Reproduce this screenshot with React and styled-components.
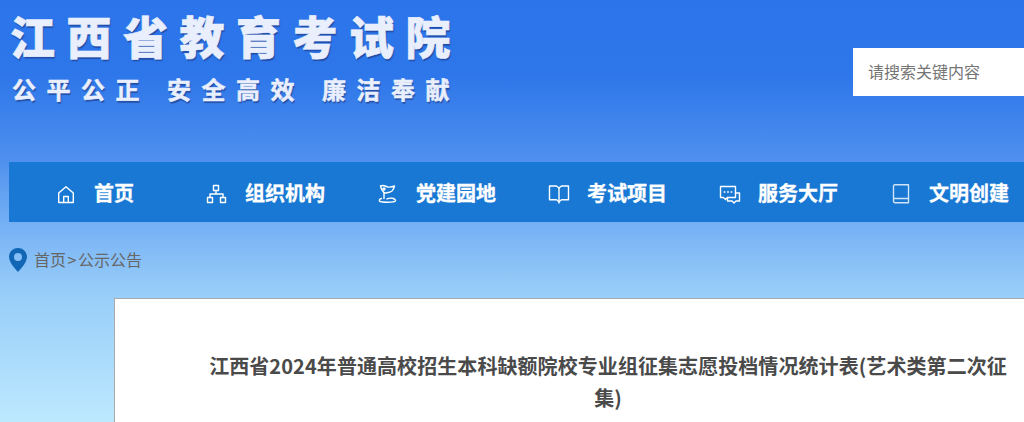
import React from "react";
import styled, { createGlobalStyle } from "styled-components";

const GlobalStyle = createGlobalStyle`
  html, body {
    margin: 0;
    padding: 0;
    height: 100%;
    overflow: hidden;
  }
  body {
    font-family: "Noto Sans CJK SC", "Noto Sans", sans-serif;
  }
`;

const Page = styled.div`
  width: 1024px;
  height: 422px;
  overflow: hidden;
  background: linear-gradient(180deg, #2b74ea 0%, #2e77ea 18%, #4f90ee 38%, #75b0f5 53%, #97cdf8 69%, #bde9ff 100%);
`;

const Header = styled.header`
  display: flex;
  justify-content: space-between;
  height: 162px;
`;

const Logo = styled.div`
  padding: 5px 0 0 10px;
  color: #e9effd;
  text-shadow: 1px 2px 1px rgba(30, 60, 140, 0.7);
`;

const LogoTitle = styled.div`
  font-size: 45px;
  font-weight: 900;
  line-height: 62px;
  letter-spacing: 11.5px;
  white-space: nowrap;
  -webkit-text-stroke: 0.6px #e9effd;
`;

const Slogan = styled.div`
  display: flex;
  gap: 17px;
  margin: 5px 0 0 2px;
  font-size: 24px;
  font-weight: 700;
  line-height: 34px;
  letter-spacing: 10.5px;
  white-space: nowrap;
  -webkit-text-stroke: 0.5px #e9effd;
`;

const SearchBox = styled.div`
  display: flex;
  align-items: center;
  width: 171px;
  height: 48px;
  margin-top: 48px;
  padding: 0 0 2px 15px;
  box-sizing: border-box;
  background: #fff;
`;

const SearchInput = styled.input`
  width: 100%;
  border: none;
  outline: none;
  padding: 0;
  background: transparent;
  font: 400 16px "Noto Sans CJK SC", sans-serif;
  &::placeholder {
    color: #757575;
    opacity: 1;
  }
`;

const Nav = styled.nav`
  display: flex;
  align-items: center;
  height: 60px;
  margin-left: 9px;
  padding-left: 46px;
  background: #1878d3;
`;

const NavItem = styled.a`
  display: flex;
  flex: 0 0 auto;
  align-items: center;
  gap: 19px;
  width: ${(p) => (p.$short ? 151 : 171)}px;
  padding-top: 2px;
  box-sizing: border-box;
  color: #fff;
  font-size: 20px;
  font-weight: 700;
  line-height: 28px;
  white-space: nowrap;
  -webkit-text-stroke: 0.3px #fff;
`;

const NavIcon = styled.svg`
  flex: 0 0 20px;
  width: 20px;
  height: 20px;
  margin-top: 1px;
  overflow: visible;
  fill: none;
  stroke: #fff;
  stroke-width: 1.4;
  stroke-linejoin: round;
  stroke-linecap: round;
  opacity: ${(p) => p.$dim || 1};
`;

const Breadcrumb = styled.div`
  display: flex;
  align-items: center;
  gap: 7px;
  height: 76px;
  padding: 0 0 2px 9px;
  box-sizing: border-box;
  color: #666;
  font-size: 16px;
`;

const Pin = styled.svg`
  width: 18px;
  height: 24px;
  margin-top: 2px;
  fill: #1167b5;
`;

const Separator = styled.span`
  margin: 0 1.5px;
`;

const Card = styled.main`
  width: 1000px;
  height: 200px;
  margin-left: 114px;
  border: 1px solid #aaa;
  background: #fff;
`;

const Title = styled.h1`
  width: 816px;
  margin: 0 0 0 85px;
  padding-top: 51px;
  color: #4a4a4a;
  font-size: 20px;
  font-weight: 700;
  line-height: 32px;
  letter-spacing: 0.07px;
  text-align: center;
`;

const icons = {
  home: (
    <>
      <path d="M3.7 9 11 2.7 18.3 9v9.5H3.7z" />
      <path d="M8.7 18.5v-6h4.6v6" />
    </>
  ),
  org: (
    <>
      <rect x="7.5" y="1.5" width="5" height="5" />
      <rect x="1.5" y="13.5" width="5" height="5" />
      <rect x="14.5" y="13.5" width="5" height="5" />
      <path d="M10 6.5V10M4 13.5V10h13v3.5" />
    </>
  ),
  flag: (
    <>
      <path d="M3.5 2c3-1.5 5 .5 7.5 1 2.5.4 4.5-.2 6.5-1-.5 2-1 3.6-2.5 5-2.5 1.8-5 1.6-7 2.2-1.5-.4-3.8-4-4.5-7.2z" />
      <path d="M7 9v5.5" />
      <path d="M4.5 14.5C2.5 15 2 16 2.5 17c1 1.5 14 1.8 15.8 0 .8-1-.5-2.2-3-2.7-2-.3-4 0-5.3.6" />
      <circle cx="7" cy="5" r="1" />
    </>
  ),
  book: (
    <>
      <path d="M1.5 2H8.5L11 4 13.5 2H20.5V15.8H13.5L11 17.8 8.5 15.8H1.5z" />
      <path d="M11 4V19" />
    </>
  ),
  chat: (
    <>
      <path d="M1.5 2.5H16.5V13.5H8.5L6.5 15.5 4.5 13.5H1.5z" />
      <path d="M16.5 9H20.5V17H17L15 19 13 17H8.5V13.5" />
      <path d="M5.2 8h.6M8.7 8h.6M12.2 8h.6" strokeWidth="1.6" />
    </>
  ),
  notebook: (
    <>
      <path d="M5 .7H18.5V18.8H5C3.8 18.8 3.5 17.8 3.5 16.5V2.5C3.5 1.3 3.8.7 5 .7z" />
      <path d="M3.8 14.5H18.5" />
    </>
  ),
};

const navItems = [
  { label: "首页", icon: "home", short: true },
  { label: "组织机构", icon: "org" },
  { label: "党建园地", icon: "flag" },
  { label: "考试项目", icon: "book" },
  { label: "服务大厅", icon: "chat" },
  { label: "文明创建", icon: "notebook", dim: 0.8 },
];

const App = () => {
  return (
    <Page>
      <GlobalStyle />
      <Header>
        <Logo>
          <LogoTitle>江西省教育考试院</LogoTitle>
          <Slogan>
            <span>公平公正</span>
            <span>安全高效</span>
            <span>廉洁奉献</span>
          </Slogan>
        </Logo>
        <SearchBox>
          <SearchInput placeholder="请搜索关键内容" />
        </SearchBox>
      </Header>
      <Nav>
        {navItems.map((item) => (
          <NavItem key={item.label} $short={item.short}>
            <NavIcon viewBox="0 0 20 20" $dim={item.dim}>
              {icons[item.icon]}
            </NavIcon>
            {item.label}
          </NavItem>
        ))}
      </Nav>
      <Breadcrumb>
        <Pin viewBox="0 0 18 24">
          <path
            fillRule="evenodd"
            d="M9 0C4 0 0 4 0 9c0 6 9 15 9 15s9-9 9-15c0-5-4-9-9-9zm0 5a4 4 0 1 1 0 8 4 4 0 0 1 0-8z"
          />
        </Pin>
        <span>首页<Separator>&gt;</Separator>公示公告</span>
      </Breadcrumb>
      <Card>
        <Title>江西省2024年普通高校招生本科缺额院校专业组征集志愿投档情况统计表(艺术类第二次征集)</Title>
      </Card>
    </Page>
  );
};

export default App;
